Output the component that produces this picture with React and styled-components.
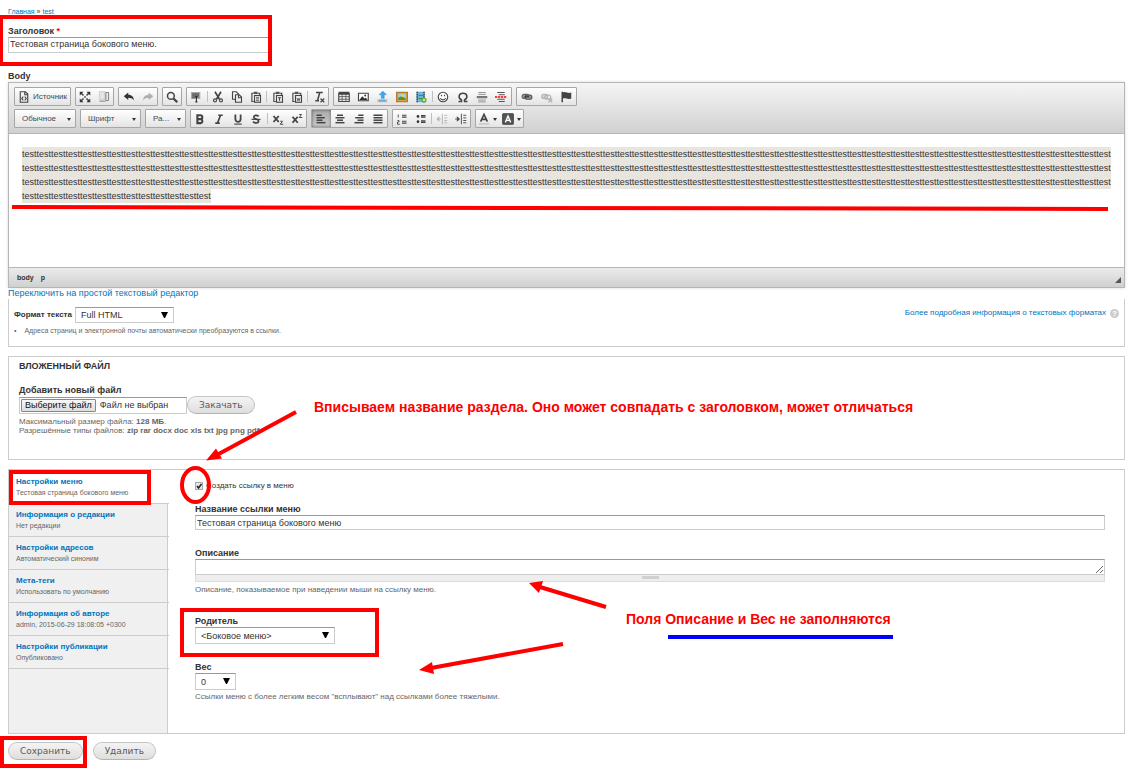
import React from "react";
import styled, { createGlobalStyle, css } from "styled-components";

const Global = createGlobalStyle`
  *, *::before, *::after { box-sizing: border-box; }
  body {
    margin: 0;
    background: #fff;
    color: #333;
    font-family: "Liberation Sans", Arial, sans-serif;
    font-size: 9px;
    line-height: 12px;
  }
  input, select, textarea, button { font-family: inherit; color: inherit; margin: 0; }
  h2, p, ul { margin: 0; padding: 0; }
`;

const Page = styled.div`
  position: relative;
  padding: 6px 11px 12px 8px;
`;

const Link = styled.a`
  color: #0074bd;
  text-decoration: none;
`;

const Breadcrumb = styled.nav`
  font-size: 7px;
  line-height: 12px;
  margin-bottom: 7px;
`;

const Label = styled.label`
  display: block;
  font-size: 9px;
  line-height: 12px;
  font-weight: bold;
`;

const Required = styled.span`
  color: #f00;
`;

const fieldBorder = css`
  background: #fff;
  border: 1px solid #ccc;
  border-top-color: #999;
  border-radius: 0;
  outline: 0;
`;

const TextInput = styled.input`
  ${fieldBorder}
  display: block;
  width: ${(p) => p.$width || "100%"};
  height: ${(p) => (p.$width ? "16px" : "15px")};
  padding: 0 1px ${(p) => (p.$width ? "2px" : "0")};
  font-size: 9px;
`;

const BodyLabel = styled(Label)`
  margin-top: 17px;
`;

/* ---------- editor ---------- */

const Editor = styled.section`
  border: 1px solid #b6b6b6;
  box-shadow: 0 0 3px rgba(0, 0, 0, 0.15);
`;

const Toolbar = styled.div`
  display: flex;
  flex-direction: column;
  gap: 3px;
  padding: 4px 5px 5px;
  background: linear-gradient(#f5f5f5, #cfd1cf);
  border-bottom: 1px solid #b6b6b6;
`;

const ToolRow = styled.div`
  display: flex;
  flex-wrap: wrap;
  gap: 4px;
`;

const Group = styled.div`
  display: flex;
  align-items: stretch;
  width: ${(p) => p.$width}px;
  height: 19px;
  border: 1px solid #a6a6a6;
  border-radius: 1px;
  background: linear-gradient(#fff, #e4e4e4);
`;

const ToolButton = styled.button`
  display: flex;
  flex: 1 1 0;
  min-width: 0;
  align-items: center;
  justify-content: ${(p) => (p.$combo ? "space-between" : "center")};
  gap: 3px;
  padding: 0 ${(p) => (p.$combo ? 4 : 0)}px 0 ${(p) => (p.$combo ? 7 : 0)}px;
  border: 0;
  font-size: 8px;
  color: #474747;
  background: ${(p) => (p.$active ? "linear-gradient(#aaa, #cacaca)" : "transparent")};
  box-shadow: ${(p) => (p.$active ? "inset 0 0 3px rgba(0,0,0,.5)" : "none")};
  opacity: ${(p) => (p.disabled ? 0.35 : 1)};
`;

const Separator = styled.span`
  width: 1px;
  margin: 3px 1px;
  background: #c0c0c0;
`;

const Glyph = styled.svg`
  display: block;
  flex: none;
  width: ${(p) => p.$w || 12}px;
  height: 12px;
  overflow: visible;
  fill: none;
  stroke: #444;
  stroke-width: 1.5;
`;

const Content = styled.div`
  height: 133px;
  padding: 13px;
  line-height: 14px;
  background: #fff;
  overflow: auto;
`;

const Selected = styled.span`
  padding: 2px 0;
  background: #e8e5df;
`;

const StatusBar = styled.div`
  display: flex;
  align-items: center;
  gap: 7px;
  height: 20px;
  padding: 0 3px 0 8px;
  border-top: 1px solid #b6b6b6;
  background: linear-gradient(#ebebeb, #cfd1cf);
  font-size: 7px;
  font-weight: bold;
`;

const Resizer = styled.svg`
  width: 6px;
  height: 6px;
  margin: 4px 0 0 auto;
  fill: #555;
`;

const SwitchLine = styled.p`
  line-height: 11px;
`;

/* ---------- format ---------- */

const FormatBox = styled.section`
  height: 48px;
  padding: 8px 5px 0;
  border: 1px solid #ccc;
  border-top: 0;
`;

const FormatRow = styled.div`
  display: flex;
  align-items: center;
  gap: 3px;
`;

const FormatLabel = styled.label`
  font-size: 8px;
  font-weight: bold;
`;

const HelpLink = styled(Link)`
  display: flex;
  align-self: flex-start;
  align-items: center;
  gap: 4px;
  margin-left: auto;
  font-size: 8px;
`;

const HelpMark = styled.span`
  width: 9px;
  height: 9px;
  border-radius: 50%;
  background: #ccc;
  color: #fff;
  font-size: 8px;
  line-height: 9px;
  font-weight: bold;
  text-align: center;
`;

const Tips = styled.ul`
  display: flex;
  gap: 8px;
  margin-top: 3px;
  list-style: none;
  color: #666;
  font-size: 7px;
  line-height: 10px;

  &::before { content: "•"; }
`;

const SelectWrap = styled.span`
  position: relative;
  display: block;
  width: ${(p) => p.$width}px;

  select {
    ${fieldBorder}
    appearance: none;
    display: block;
    width: 100%;
    height: ${(p) => (p.$short ? 16 : 17)}px;
    padding: 0 5px;
    font-size: 9px;
  }
  svg {
    position: absolute;
    right: 6px;
    top: 4px;
    width: 7px;
    height: 8px;
    pointer-events: none;
  }
`;

/* ---------- attachment ---------- */

const Attachment = styled.section`
  min-height: 104px;
  margin-top: 9px;
  padding: 3px 10px;
  border: 1px solid #ccc;

  h2 { font-size: 9px; line-height: 12px; margin-bottom: 12px; }
`;

const FileRow = styled.div`
  display: flex;
  align-items: center;
  margin-bottom: 3px;
`;

const FileField = styled.label`
  ${fieldBorder}
  display: flex;
  align-items: center;
  gap: 4px;
  width: 168px;
  height: 17px;
  padding: 0 1px;

  input { position: absolute; width: 1px; height: 1px; opacity: 0; }
`;

const FilePick = styled.span`
  padding: 0 3px;
  border: 1px solid #888;
  border-radius: 1px;
  background: linear-gradient(#f8f8f8, #ddd);
  line-height: 11px;
  white-space: nowrap;
  color: #111;
`;

const Pill = styled.button`
  height: 18px;
  padding: 0 11px;
  border: 1px solid #c4c4c4;
  border-bottom-color: #b4b4b4;
  border-radius: 9px;
  background: linear-gradient(#f4f4f4, #dedede);
  color: #5a5a5a;
  font-family: "DejaVu Sans", Verdana, sans-serif;
  font-size: 9px;
  line-height: 16px;
`;

const Hint = styled.p`
  font-size: 8px;
  line-height: 9px;
  color: #666;
`;

/* ---------- vertical tabs ---------- */

const Tabs = styled.section`
  display: flex;
  min-height: 265px;
  margin-top: 9px;
  border: 1px solid #ccc;
`;

const TabList = styled.div`
  flex: none;
  width: 159px;
  background: #f0f0f0;
  border-right: 1px solid #ccc;
`;

const Tab = styled.a`
  display: block;
  height: ${(p) => (p.$active ? 34 : 33)}px;
  width: 160px;
  padding: ${(p) => (p.$active ? 6 : 5)}px 0 0 7px;
  border-bottom: 1px solid #ccc;
  background: ${(p) => (p.$active ? "#fff" : "transparent")};
  color: #666;
  font-size: 7px;
  line-height: 10px;
  text-decoration: none;

  strong { display: block; color: #0074bd; font-size: 8px; line-height: 12px; }
`;

const Pane = styled.div`
  flex: 1;
  min-width: 0;
  padding: 10px 19px 0 27px;
`;

const CheckRow = styled.label`
  display: flex;
  align-items: center;
  gap: 3px;
  margin-bottom: 11px;
  font-size: 8px;
`;

const CheckBox = styled.span`
  display: grid;
  width: 8px;
  height: 8px;

  input, svg { grid-area: 1 / 1; width: 8px; height: 8px; }
  input { appearance: none; border: 1px solid #aaa; background: #e6e6e6; }
  svg { fill: none; stroke: #222; stroke-width: 1.5; pointer-events: none; }
`;

const Field = styled.div`
  margin-bottom: ${(p) => p.$gap || 0}px;
`;

const WeightHint = styled(Hint)`
  margin-top: 2px;
`;

const Area = styled.textarea`
  ${fieldBorder}
  display: block;
  width: 100%;
  height: 16px;
  padding: 0 2px;
  font-size: 9px;
  resize: vertical;
`;

const Grippie = styled.div`
  display: flex;
  justify-content: center;
  height: 7px;
  margin-bottom: 3px;
  padding-top: 1px;
  border: 1px solid #ddd;
  border-top: 0;
  background: #eee;

  &::before { content: ""; width: 17px; height: 3px; background: #d0d0d0; }
`;

const Actions = styled.div`
  display: flex;
  gap: 10px;
  margin-top: 8px;
`;

/* ---------- notes drawn over the page ---------- */

const Marks = styled.svg`
  position: absolute;
  left: 0;
  top: 0;
  width: 1136px;
  height: 772px;
  max-width: 100%;
  pointer-events: none;
  fill: none;
  stroke: #f00;
  stroke-width: 4;
`;

const Note = styled.p`
  position: absolute;
  left: ${(p) => p.$x}px;
  top: ${(p) => p.$y}px;
  color: #f00;
  font-size: 14px;
  line-height: 16px;
  font-weight: bold;
  white-space: nowrap;
`;

/* ---------- toolbar icons on a 16 unit grid ---------- */

const clip = (
  <>
    <path d="M5 3H2.5V14H5M10 3h3v3" />
    <rect x="5" y="1" width="5" height="3" fill="#555" stroke="none" />
    <rect x="6" y="6" width="8" height="9" />
  </>
);
const bars = (rows) => rows.map(([x, w], i) => <path key={i} d={`M${x} ${3 + i * 3.3}h${w}`} strokeWidth="2" />);

const icons = {
  source: <><path d="M3 1h7l3 3v11H3zM9 1v4h4" /><path d="M7 7.500L5 10l2 2.500M9 7.500l2 2.500-2 2.500" /></>,
  maximize: <><path d="M2 2l4 4M14 2l-4 4M2 14l4-4M14 14l-4-4" strokeWidth="2" /><path d="M1 1h5L1 6zM15 1h-5l5 5zM1 15h5L1 10zM15 15h-5l5-5z" fill="#333" stroke="none" /><path d="M7 7h2v2H7z" fill="#333" stroke="none" /></>,
  blocks: <><path d="M2 1h7v10H2z" fill="#e6e6e6" stroke="#d0d0d0" /><path d="M10.500 2h3.500v10a2 2 0 0 1-3.500 0z" stroke="#888" /><path d="M2 13.500h8" stroke="#888" /></>,
  undo: <path d="M1 7l6-5v3c5 0 7 3 8 8-2-3-4-4-8-4v3z" fill="#333" stroke="none" />,
  redo: <path d="M15 7L9 2v3c-5 0-7 3-8 8 2-3 4-4 8-4v3z" fill="#333" stroke="none" />,
  find: <><circle cx="6.500" cy="6.500" r="4.500" strokeWidth="2" /><path d="M10 10l5 5" strokeWidth="3" /></>,
  select: <><path d="M2 2h11v8H2z" fill="#888" stroke="#aaa" /><path d="M3 4h9M3 6.500h9M3 9h4" stroke="#444" strokeWidth="1" /><path d="M8.500 7v8M7 7.500h3M7 14.500h3" stroke="#222" strokeWidth="1.300" /></>,
  cut: <><path d="M4 1l6 10M12 1L6 11" strokeWidth="2.200" /><circle cx="4" cy="12.500" r="2" /><circle cx="12" cy="12.500" r="2" /></>,
  copy: <><path d="M6 11H2V1h5l3 3v1" /><path d="M6 5h5l3 3v7H6zM10 5v4h4" /></>,
  paste: <>{clip}<path d="M8 8.500h4M8 10.500h4M8 12.500h4" strokeWidth="1" /></>,
  pasteText: <>{clip}<path d="M8 9h4M10 9v4" /></>,
  pasteWord: <>{clip}<path d="M8 9l1 4 1-3 1 3 1-4" strokeWidth="1" /></>,
  clear: <><path d="M4 2h9M9 2L6 13M3 13h5" strokeWidth="2" /><path d="M10 10l5 5M15 10l-5 5" /></>,
  table: <><path d="M1 3h14v11H1z" /><path d="M1 3h14" strokeWidth="4" /><path d="M1 7.500h14M1 11h14M5.500 3v11M10.500 3v11" strokeWidth="1" /></>,
  image: <><path d="M2 3h13v10H2z" fill="#fff" /><path d="M3 12l4-5 3 3 2-1 2 3z" fill="#333" stroke="none" /><circle cx="11" cy="6" r="1.300" fill="#333" stroke="none" /></>,
  upload: <><path d="M9 0l5 5h-3v5H7V5H4z" fill="#3da5e8" stroke="#2c8fd0" strokeWidth=".5" /><path d="M2 11h13v4H2z" fill="#bbb" stroke="none" /><path d="M4 13h9" stroke="#4ba8e0" /></>,
  gallery: <><path d="M1 2h14v12H1z" fill="#e8b75c" stroke="#bd7d28" strokeWidth="2" /><path d="M3 4h10v8H3z" fill="#8fd0ee" stroke="none" /><path d="M3 9l4-2 6 3v2H3z" fill="#55912e" stroke="none" /><circle cx="9" cy="6" r="2" fill="#f6d24b" stroke="none" /></>,
  media: <><path d="M2 1h11v14H2z" fill="#6cb3dd" stroke="none" /><path d="M3 1v14M12 1v14" strokeWidth="2" strokeDasharray="2 1" /><path d="M5 6h6M5 10h6" stroke="#4c8a31" /><circle cx="12" cy="12" r="3.500" fill="#4caf2f" stroke="none" /><path d="M10 12h4M12 10v4" stroke="#fff" strokeWidth="1" /></>,
  smiley: <><circle cx="8" cy="8" r="6.300" fill="#fff" /><path d="M4.500 9.500c1 3 6 3 7 0" /><path d="M6 5v2M10 5v2" /></>,
  omega: <path d="M2 14h4v-2C1 9 2 3 8 3s7 6 2 9v2h4" strokeWidth="2" />,
  rule: <><path d="M3 2h10M3 4.500h10M3 12h10M3 14.500h10" stroke="#777" strokeWidth="1" /><path d="M1 8.200h14" stroke="#777" strokeWidth="3" /></>,
  pagebreak: <><path d="M3 2h10M5 5h8M3 11h10M5 14h8" stroke="#555" /><path d="M0 8h16" stroke="#f00" strokeWidth="2" strokeDasharray="3 1" /></>,
  link: <><rect x="1.500" y="4.500" width="9" height="5.500" rx="2.700" fill="#999" stroke="#666" /><rect x="5.500" y="5.500" width="9" height="5.500" rx="2.700" fill="#999" stroke="#555" /><path d="M5 7.800h6" stroke="#222" /></>,
  unlink: <><rect x="1" y="4.500" width="8" height="5.500" rx="2.700" fill="#999" /><rect x="5" y="5.500" width="8" height="5.500" rx="2.700" /><path d="M10 10l5 5M15 10l-5 5" /></>,
  anchor: <path d="M2 1h2v1c4-2 6 2 11 0v8c-5 2-7-1-11 0v5H2z" fill="#444" stroke="none" />,
  bold: <path d="M4.500 3v10.500h4.500a2.700 2.700 0 0 0 0-5.300H4.500 8.500a2.600 2.600 0 0 0 0-5.200z" strokeWidth="2.800" />,
  italic: <path d="M7 3h6M3 13.500h6M10 3L6 13.500" strokeWidth="2.200" />,
  underline: <><path d="M4.500 2v6c0 5 7 5 7 0V2" strokeWidth="2.400" /><path d="M3 14.800h10" /></>,
  strike: <><path d="M11.500 4.500C9 2 5 3 5 5.500c0 3 7 2 6.500 5.500-.500 3-5 3-7.500.500" strokeWidth="2.300" /><path d="M2 8.500h12" /></>,
  sub: <><path d="M2 4l7 8M9 4l-7 8" strokeWidth="2.500" /><path d="M11 11h3l-3 4h4" strokeWidth="1.300" /></>,
  sup: <><path d="M2 5l7 8M9 5l-7 8" strokeWidth="2.500" /><path d="M11 2h3l-3 4h4" strokeWidth="1.300" /></>,
  left: bars([[2, 7], [2, 11], [2, 8], [2, 12]]),
  center: bars([[4, 8], [2, 12], [4, 8], [2, 12]]),
  right: bars([[7, 7], [3, 11], [6, 8], [2, 12]]),
  justify: bars([[2, 12], [2, 12], [2, 12], [2, 12]]),
  ol: <><path d="M3 2v4M2 10h2v2H2v3h3" strokeWidth="1.200" /><path d="M8 3h6M8 5.500h6M8 11h6M8 13.500h6" /></>,
  ul: <><circle cx="4" cy="4.500" r="1.800" fill="#333" stroke="none" /><circle cx="4" cy="11.500" r="1.800" fill="#333" stroke="none" /><path d="M8 3.500h6M8 5.500h6M8 10.500h6M8 12.500h6" /></>,
  outdent: <><path d="M8.500 1v14M11 3h4M11 6.500h4M11 10h4M11 13h4" strokeWidth="1.200" /><path d="M1 8l3-3v6zM3 8h4" fill="#444" strokeWidth="1" /></>,
  indent: <><path d="M8.500 1v14M11 3h4M11 6.500h4M11 10h4M11 13h4" strokeWidth="1.200" /><path d="M6 8L3 5v6zM0 8h4" fill="#444" strokeWidth="1" /></>,
  color: <><path d="M3.500 11.500L8 2l4.500 9.500M5 8.500h6" strokeWidth="2.200" /><path d="M1 14.500h14" stroke="#bbb" /></>,
  bgcolor: <><rect x="1" y="1" width="14" height="14" rx="1" fill="#555" /><path d="M4.500 12.500L8 4l3.500 8.500M6 9.800h4" stroke="#fff" strokeWidth="1.800" /></>,
};

const Icon = ({ name }) => <Glyph viewBox="0 0 16 16" aria-hidden="true">{icons[name]}</Glyph>;
const Caret = () => (
  <Glyph viewBox="0 0 4 12" $w={4} aria-hidden="true"><path d="M0 5h4L2 8z" fill="#333" stroke="none" /></Glyph>
);
const DropArrow = () => <svg viewBox="0 0 7 8" aria-hidden="true"><path d="M0 1h7L4 7H3z" fill="#000" /></svg>;

const rowOne = [
  [57, ["source:Источник"]],
  [39, ["maximize", "blocks"]],
  [40, ["undo", "-redo"]],
  [20, ["find"]],
  [143, ["select", "|", "cut", "copy", "paste", "|", "pasteText", "pasteWord", "|", "clear"]],
  [179, ["table", "image", "upload", "gallery", "media", "|", "smiley", "omega", "rule", "pagebreak"]],
  [61, ["link", "-unlink", "anchor"]],
];
const rowTwo = [
  [62, ["=Обычное"]],
  [61, ["=Шрифт"]],
  [41, ["=Ра..."]],
  [117, ["bold", "italic", "underline", "strike", "|", "sub", "sup"]],
  [77, ["*left", "center", "right", "justify"]],
  [79, ["ol", "ul", "|", "-outdent", "indent"]],
  [49, ["color>", "bgcolor>"]],
];

function Tool({ item }) {
  if (item === "|") return <Separator />;
  if (item[0] === "=") return <ToolButton type="button" $combo>{item.slice(1)}<Caret /></ToolButton>;
  const [name, text] = item.replace(/^[-*]/, "").replace(">", "").split(":");
  return (
    <ToolButton type="button" aria-label={text || name} $active={item[0] === "*"} disabled={item[0] === "-"}>
      <Icon name={name} />
      {text}
      {item.endsWith(">") && <Caret />}
    </ToolButton>
  );
}

const ToolLine = ({ groups }) => (
  <ToolRow>
    {groups.map(([width, items], i) => (
      <Group key={i} $width={width}>
        {items.map((item, k) => <Tool key={k} item={item} />)}
      </Group>
    ))}
  </ToolRow>
);

function Select({ id, width, short, value }) {
  return (
    <SelectWrap $width={width} $short={short}>
      <select id={id} defaultValue={value}><option>{value}</option></select>
      <DropArrow />
    </SelectWrap>
  );
}

const tabs = [
  ["Настройки меню", "Тестовая страница бокового меню"],
  ["Информация о редакции", "Нет редакции"],
  ["Настройки адресов", "Автоматический синоним"],
  ["Мета-теги", "Использовать по умолчанию"],
  ["Информация об авторе", "admin, 2015-06-29 18:08:05 +0300"],
  ["Настройки публикации", "Опубликовано"],
];

export default function App() {
  return (
    <>
      <Global />
      <Page>
        <Breadcrumb><Link href="#home">Главная</Link> » <Link href="#test">test</Link></Breadcrumb>

        <Label htmlFor="title">Заголовок <Required>*</Required></Label>
        <TextInput id="title" $width="262px" defaultValue="Тестовая страница бокового меню." />

        <BodyLabel as="div">Body</BodyLabel>
        <Editor>
          <Toolbar>
            <ToolLine groups={rowOne} />
            <ToolLine groups={rowTwo} />
          </Toolbar>
          <Content>
            <Selected>
              {Array.from({ length: 238 }, (_, i) => <React.Fragment key={i}>test<wbr /></React.Fragment>)}
            </Selected>
          </Content>
          <StatusBar>
            <span>body</span><span>p</span>
            <Resizer viewBox="0 0 6 6"><path d="M6 0v6H0z" /></Resizer>
          </StatusBar>
        </Editor>
        <SwitchLine><Link href="#plain">Переключить на простой текстовый редактор</Link></SwitchLine>

        <FormatBox>
          <FormatRow>
            <FormatLabel htmlFor="format">Формат текста</FormatLabel>
            <Select id="format" width={99} short value="Full HTML" />
            <HelpLink href="#formats">Более подробная информация о текстовых форматах <HelpMark>?</HelpMark></HelpLink>
          </FormatRow>
          <Tips><li>Адреса страниц и электронной почты автоматически преобразуются в ссылки.</li></Tips>
        </FormatBox>

        <Attachment>
          <h2>ВЛОЖЕННЫЙ ФАЙЛ</h2>
          <Label htmlFor="file">Добавить новый файл</Label>
          <FileRow>
            <FileField>
              <input id="file" type="file" />
              <FilePick>Выберите файл</FilePick>
              <span>Файл не выбран</span>
            </FileField>
            <Pill type="button">Закачать</Pill>
          </FileRow>
          <Hint>Максимальный размер файла: <strong>128 МБ</strong>.</Hint>
          <Hint>Разрешённые типы файлов: <strong>zip rar docx doc xls txt jpg png pdf</strong>.</Hint>
        </Attachment>

        <Tabs>
          <TabList>
            {tabs.map(([name, summary], i) => (
              <Tab key={name} href={`#tab-${i}`} $active={i === 0}><strong>{name}</strong>{summary}</Tab>
            ))}
          </TabList>
          <Pane>
            <CheckRow>
              <CheckBox>
                <input type="checkbox" defaultChecked />
                <svg viewBox="0 0 8 8"><path d="M2 4l1.500 2L6.500 2" /></svg>
              </CheckBox>
              Создать ссылку в меню
            </CheckRow>
            <Field $gap={17}>
              <Label htmlFor="link-title">Название ссылки меню</Label>
              <TextInput id="link-title" defaultValue="Тестовая страница бокового меню" />
            </Field>
            <Field $gap={21}>
              <Label htmlFor="description">Описание</Label>
              <Area id="description" />
              <Grippie />
              <Hint>Описание, показываемое при наведении мыши на ссылку меню.</Hint>
            </Field>
            <Field $gap={17}>
              <Label htmlFor="parent">Родитель</Label>
              <Select id="parent" width={140} value="<Боковое меню>" />
            </Field>
            <Field>
              <Label htmlFor="weight">Вес</Label>
              <Select id="weight" width={41} value="0" />
              <WeightHint>Ссылки меню с более легким весом "всплывают" над ссылками более тяжелыми.</WeightHint>
            </Field>
          </Pane>
        </Tabs>

        <Actions>
          <Pill type="submit">Сохранить</Pill>
          <Pill type="button">Удалить</Pill>
        </Actions>

        <Marks viewBox="0 0 1136 772" preserveAspectRatio="xMinYMin" aria-hidden="true">
          <rect x="1" y="17" width="269" height="47" />
          <rect x="11" y="472" width="138" height="31" />
          <rect x="182" y="610" width="195" height="45" />
          <rect x="2" y="738" width="83" height="28" />
          <ellipse cx="195.500" cy="485" rx="13.500" ry="17" />
          <path d="M12 207L1108 209" />
          <path d="M296 412L215 456M606 607L540 587M563 644L431 668" />
          <path d="M206 460.500l10-12 6 10zM529 583l14-2-4 12zM419 670l13-8 2 12z" fill="#f00" stroke="none" />
          <path d="M668 637h225" stroke="#00f" />
        </Marks>
        <Note $x={314} $y={399}>Вписываем название раздела. Оно может совпадать с заголовком, может отличаться</Note>
        <Note $x={626} $y={611}>Поля Описание и Вес не заполняются</Note>
      </Page>
    </>
  );
}
